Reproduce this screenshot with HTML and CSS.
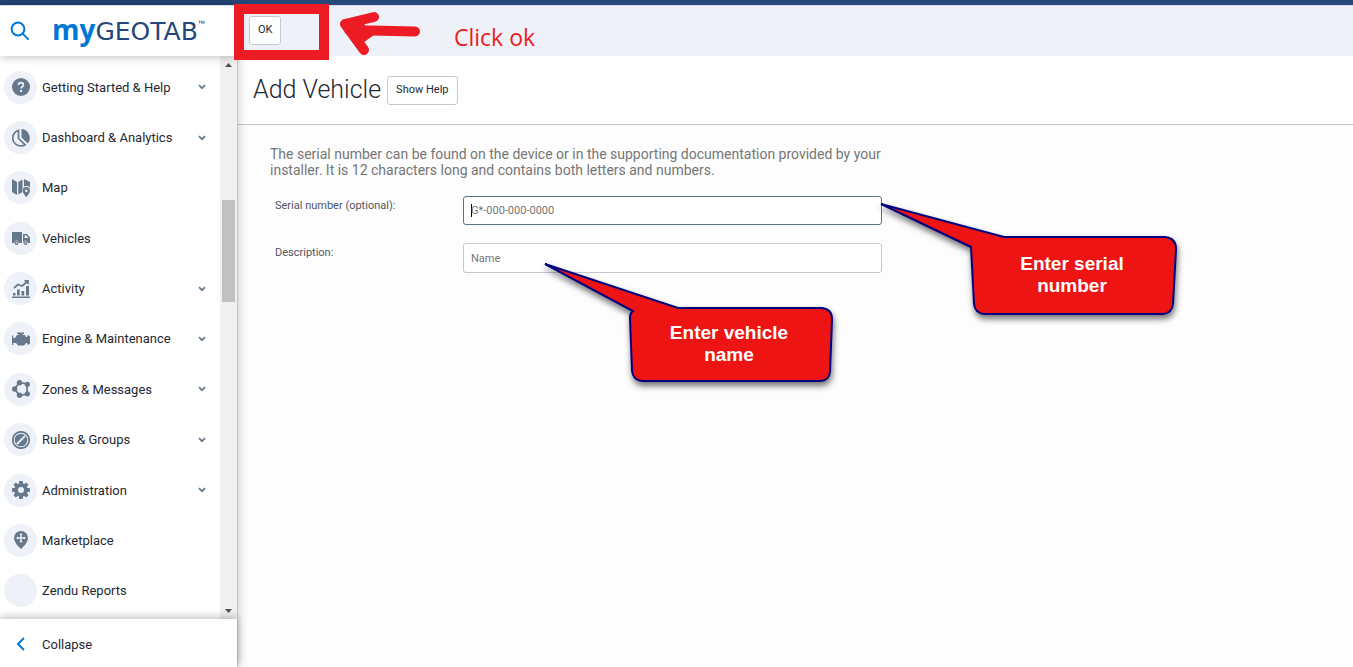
FILE: index.html
```html
<!DOCTYPE html>
<html lang="en">
<head>
<meta charset="utf-8">
<title>Add Vehicle - MyGeotab</title>
<link rel="stylesheet" href="styles.css">
</head>
<body>
<svg class="defs" aria-hidden="true">
  <symbol id="chevron" viewBox="0 0 8 6"><path d="M1 1.2 4 4.2 7 1.2" fill="none" stroke="#66788c" stroke-width="1.7"/></symbol>
</svg>
<div class="app">
  <aside class="sidebar">
    <div class="brand">
      <button class="search" aria-label="Search"><svg width="20" height="20" viewBox="0 0 20 20"><circle cx="8" cy="8" r="6.4"/><path d="m12.6 12.6 6 6"/></svg></button>
      <a class="logo" href="#"><span class="logo-my">my</span><span class="logo-geo">GEOTAB</span><span class="logo-tm">™</span></a>
    </div>
    <div class="menu">
      <nav class="nav">
        <a class="item" href="#"><span class="disc"><svg class="icon" viewBox="0 0 18 18"><circle cx="9" cy="9" r="9"/><path class="cut-line" d="M6.6 7.1C6.6 3.9 11.4 4 11.4 7c0 1.800-2.400 1.900-2.400 3.600"/><rect class="cut" x="8" y="12" width="2" height="2"/></svg></span><span class="name">Getting Started &amp; Help</span><svg class="chev"><use href="#chevron"/></svg></a>
        <a class="item" href="#"><span class="disc"><svg class="icon" viewBox="0 0 18 18"><path class="line" d="M6.500 1.400A7.900 7.900 0 0 0 9 16.900 7.900 7.900 0 0 0 13.200 15.800L6.500 9.500Z"/><path d="M9.500 0A9 9 0 0 1 15.800 14.600L9.500 8.500Z"/></svg></span><span class="name">Dashboard &amp; Analytics</span><svg class="chev"><use href="#chevron"/></svg></a>
        <a class="item" href="#"><span class="disc"><svg class="icon" viewBox="0 0 18 18"><path d="M0 0 5 3V16L0 13ZM6.300 3 10.500.500V13L6.300 15.500ZM12 0l6 3v5.500a5 5 0 0 0-6-1Z"/><path class="halo" fill-rule="evenodd" d="M14.300 8a3.700 3.700 0 0 0-3.700 3.700c0 2.500 3.700 6.300 3.700 6.300s3.700-3.800 3.700-6.300A3.700 3.700 0 0 0 14.300 8Zm0 2.400a1.300 1.300 0 1 1 0 2.600 1.300 1.300 0 0 1 0-2.600Z"/></svg></span><span class="name">Map</span></a>
        <a class="item" href="#"><span class="disc"><svg class="icon" viewBox="0 0 18 18"><path d="M0 3h10v11H0ZM11 5h4l3 3.500V14h-7Z"/><path class="cut" d="M12.500 6.500h2l2 2.500h-4Z"/><g class="halo"><circle cx="4.500" cy="14" r="2"/><circle cx="13.500" cy="14" r="2"/></g><circle class="cut" cx="4.500" cy="14" r=".8"/><circle class="cut" cx="13.500" cy="14" r=".8"/></svg></span><span class="name">Vehicles</span></a>
        <a class="item" href="#"><span class="disc"><svg class="icon" viewBox="0 0 18 18"><path d="M0 16.500h18V18H0ZM1 13h2.500v2.500H1ZM5 9.500h2.700v6H5ZM9.500 11h2.700v4.500H9.500ZM14 6h3v9.500h-3Z"/><path class="line" d="m2 8 4-3.500 4 1.500 5.500-4.500M12.500.800H16v3.500"/></svg></span><span class="name">Activity</span><svg class="chev"><use href="#chevron"/></svg></a>
        <a class="item" href="#"><span class="disc"><svg class="icon" viewBox="0 0 18 18"><path d="M5 2.500h7V4H10.500v1H13l1 2h1.200V5.500H17l1 1v7l-1 1h-1.800V13H14l-2 2.500H6L4 13H1.300v2H0V5.500h1.300V8H3L5 5h1.500V4H5Z"/></svg></span><span class="name">Engine &amp; Maintenance</span><svg class="chev"><use href="#chevron"/></svg></a>
        <a class="item" href="#"><span class="disc"><svg class="icon" viewBox="0 0 18 18"><path class="line" d="m2.500 9 5-6.500 7.500 1.500v10l-7.500 1.500Z"/><circle cx="2.700" cy="9" r="2.700"/><circle cx="7.500" cy="2.700" r="2.700"/><circle cx="15.300" cy="4.300" r="2.600"/><circle cx="15.300" cy="13.800" r="2.600"/><circle cx="7.500" cy="15.300" r="2.700"/></svg></span><span class="name">Zones &amp; Messages</span><svg class="chev"><use href="#chevron"/></svg></a>
        <a class="item" href="#"><span class="disc"><svg class="icon" viewBox="0 0 18 18"><circle class="line" cx="9" cy="9" r="8.200"/><circle cx="9" cy="9" r="6.300"/><path class="cut-line" d="m5 13 8-8"/></svg></span><span class="name">Rules &amp; Groups</span><svg class="chev"><use href="#chevron"/></svg></a>
        <a class="item" href="#"><span class="disc"><svg class="icon" viewBox="0 0 18 18"><circle cx="9" cy="9" r="6.700"/><path d="M7.300 0h3.400l.5 4H6.800ZM7.300 18h3.400l.5-4H6.800ZM0 7.300v3.400l4 .5V6.800ZM18 7.300v3.400l-4 .5V6.800ZM1.500 3.800l2.300-2.300L7 4 4 7ZM14.200 1.500l2.300 2.300L14 7l-3-3ZM16.500 14.200l-2.300 2.300L11 14l3-3ZM3.800 16.500l-2.300-2.300L4 11l3 3Z"/><circle class="cut" cx="9" cy="9" r="3"/></svg></span><span class="name">Administration</span><svg class="chev"><use href="#chevron"/></svg></a>
        <a class="item" href="#"><span class="disc"><svg class="icon" viewBox="0 0 18 18"><path d="M9 0a7 7 0 0 0-7 7c0 5 7 11 7 11s7-6 7-11a7 7 0 0 0-7-7Z"/><path class="cut" d="m9 2 1.600 2H9.700v2.300H12v-.9l2 1.600-2 1.600v-.9H9.700V10h.9L9 12l-1.600-2h.9V7.700H6v.9L4 7l2-1.600v.9h2.300V4h-.9Z"/></svg></span><span class="name">Marketplace</span></a>
        <a class="item" href="#"><span class="disc"></span><span class="name">Zendu Reports</span></a>
      </nav>
      <div class="scroll" aria-hidden="true">
        <svg width="7" height="4" viewBox="0 0 7 4"><path d="M0 4 3.500 0 7 4Z"/></svg>
        <div class="track"><div class="thumb"></div></div>
        <svg width="7" height="4" viewBox="0 0 7 4"><path d="M0 0h7L3.500 4Z"/></svg>
      </div>
    </div>
    <button class="collapse"><svg width="9" height="14" viewBox="0 0 9 14"><path d="M8 1 2 7l6 6"/></svg><span>Collapse</span></button>
  </aside>
  <main class="main">
    <div class="toolbar">
      <button class="btn">OK</button>
    </div>
    <header class="heading">
      <h1>Add Vehicle</h1>
      <button class="btn">Show Help</button>
    </header>
    <form class="form">
      <p class="intro">The serial number can be found on the device or in the supporting documentation provided by your installer. It is 12 characters long and contains both letters and numbers.</p>
      <div class="field">
        <label for="serial">Serial number (optional):</label>
        <div class="box active"><span class="caret"></span><input id="serial" type="text" placeholder="G*-000-000-0000"></div>
      </div>
      <div class="field">
        <label for="desc">Description:</label>
        <div class="box"><input id="desc" type="text" placeholder="Name"></div>
      </div>
    </form>
  </main>
</div>
<div class="mark-frame"></div>
<svg class="mark-arrow" width="84" height="46" viewBox="0 0 84 46"><path d="M77 21.500 11 20M36 7 7 14M7 14 26 40" fill="none" stroke="#ed1c24" stroke-width="10" stroke-linecap="round"/><path d="M5 12 25 13 36 25 22 35Z" fill="#ed1c24"/></svg>
<div class="mark-text">Click ok</div>
<svg class="callout callout-serial" width="304" height="122" viewBox="0 0 304 122"><path d="M5 5 128 38H289Q300 39 300 50L297 105Q296 114 287 115H108Q99 114 98 105L95 48Z"/></svg>
<div class="note note-serial">Enter serial<br>number</div>
<svg class="callout callout-name" width="300" height="128" viewBox="0 0 300 128"><path d="M5 5 138 49H282Q292 50 292 60L290 113Q289 122 280 122H102Q93 121 92 112L90 59Q90 54 93 52Z"/></svg>
<div class="note note-name">Enter vehicle<br>name</div>
</body>
</html>
```
FILE: styles.css
```css
* { box-sizing: border-box; }
body { margin: 0; font-family: Roboto, "Liberation Sans", sans-serif; font-size: 13px; color: #1f2833; background: #fdfdfd; position: relative; overflow: hidden; }
button, input { font: inherit; color: inherit; }
.defs { position: absolute; width: 0; height: 0; }
.app { display: flex; height: 100vh; border-top: 5px solid #25477b; }
.sidebar { width: 238px; flex: none; display: flex; flex-direction: column; background: #fff; border-right: 1px solid #c3c5c8; box-shadow: 0 0 10px rgba(0,0,0,.22); z-index: 1; }
.brand { height: 51px; flex: none; display: flex; align-items: center; box-shadow: 0 2px 8px rgba(0,0,0,.22); z-index: 1; border-top: 1px solid #d5dae3; }
.search { width: 40px; height: 40px; padding: 0; border: 0; background: none; }
.search svg, .collapse svg { display: block; margin: 0 auto; fill: none; stroke: #0078d3; stroke-width: 2; }
.logo { display: flex; align-items: baseline; margin-left: 12px; padding-bottom: 2px; text-decoration: none; color: #25477b; line-height: 32px; }
.logo-my { font: bold 28px/32px "Open Sans", sans-serif; color: #0078d3; }
.logo-geo { font: 25px/32px "DejaVu Sans", sans-serif; }
.logo-tm { font-size: 12px; align-self: flex-start; line-height: 24px; }
.menu { flex: 1; min-height: 0; display: flex; }
.nav { flex: 1; display: flex; flex-direction: column; padding: 6px 0 3px; }
.item { flex: 1; display: flex; align-items: center; padding: 0 14px 0 4px; color: inherit; text-decoration: none; }
.disc { width: 33px; height: 33px; flex: none; border-radius: 50%; background: #eef1f7; display: flex; align-items: center; justify-content: center; }
.icon { width: 18px; height: 18px; fill: #66788c; }
.icon .line { fill: none; stroke: #66788c; stroke-width: 1.7; }
.icon .cut { fill: #eef1f7; }
.icon .cut-line { fill: none; stroke: #eef1f7; stroke-width: 1.8; }
.icon .halo { stroke: #eef1f7; stroke-width: 1; paint-order: stroke; }
.name { flex: 1; margin-left: 5px; }
.chev { width: 8px; height: 6px; }
.scroll { width: 17px; display: flex; flex-direction: column; align-items: center; padding: 7px 0 6px; background: #f0f0f0; }
.scroll svg { flex: none; fill: #505050; }
.track { flex: 1; width: 13px; padding-top: 133px; }
.thumb { height: 102px; background: #c1c1c1; }
.collapse { height: 48px; flex: none; display: flex; align-items: center; border: 0; background: #fff; box-shadow: 0 -2px 8px rgba(0,0,0,.25); text-align: left; padding: 2px 0 0 16px; z-index: 1; }
.collapse svg { margin: 0 17px 0 0; }
.main { flex: 1; min-width: 0; display: flex; flex-direction: column; }
.toolbar { height: 51px; flex: none; padding: 10px 11px; background: #eef1f7; border-top: 1px solid #d5dae3; }
.btn { height: 29px; padding: 0 8px 2px; border: 1px solid #c3c9d2; border-radius: 3px; background: #fff; font-size: 11px; }
.heading { height: 69px; flex: none; display: flex; align-items: center; gap: 6px; padding: 0 15px; background: #fff; border-bottom: 1px solid #c3c5cc; }
h1 { margin: 0; font-size: 25px; font-weight: 300; line-height: 32px; }
.form { padding: 21px 32px; }
.intro { margin: 0 0 18px; max-width: 616px; font-size: 14px; line-height: 16px; color: #767676; }
.field { display: flex; align-items: flex-start; max-width: 612px; margin-bottom: 18px; color: #4e5661; font-size: 11px; }
.field label { width: 193px; flex: none; padding-left: 5px; line-height: 20px; }
.box { flex: 1; height: 30px; display: flex; align-items: center; padding: 0 7px; border: 1px solid #c3c9d2; border-radius: 3px; background: #fff; }
.box.active { height: 29px; border-color: #5f7285; }
.box input { flex: 1; min-width: 0; padding: 0; border: 0; outline: 0; background: none; }
.box input::placeholder { color: #757575; opacity: 1; }
.caret { width: 1px; height: 13px; margin-right: -1px; background: #000; }
.mark-frame { position: absolute; z-index: 2; left: 234px; top: 4px; width: 95px; height: 56px; border: 10px solid #ed1c24; }
.mark-arrow { position: absolute; left: 338px; top: 10px; }
.mark-text { position: absolute; left: 454px; top: 21px; font: 23px/32px "Open Sans", sans-serif; color: #ed1c24; }
.callout { position: absolute; z-index: 2; overflow: visible; fill: #ee1414; stroke: #000080; stroke-width: 2; filter: drop-shadow(1px 4px 3px rgba(0,0,0,.55)); }
.callout-serial { left: 876px; top: 199px; }
.callout-name { left: 540px; top: 259px; }
.note { position: absolute; z-index: 3; width: 200px; text-align: center; font: bold 19px/22px "Liberation Sans", Arial, sans-serif; color: #fff; }
.note-serial { left: 972px; top: 253px; }
.note-name { left: 629px; top: 322px; }
```
